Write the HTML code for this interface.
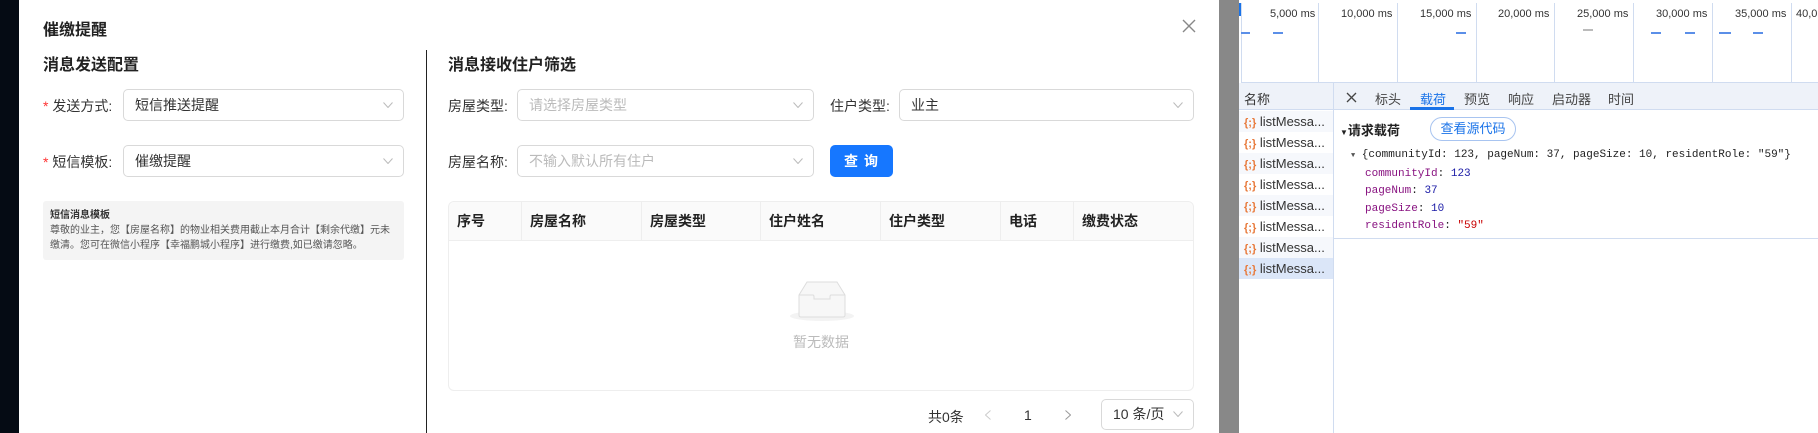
<!DOCTYPE html>
<html><head><meta charset="utf-8"><style>
*{margin:0;padding:0;box-sizing:border-box}
body{width:1818px;height:433px;overflow:hidden;position:relative;background:#fff;font-family:"Liberation Sans","Noto Sans CJK SC",sans-serif;color:#333}
.a{position:absolute;white-space:nowrap}
.sel{position:absolute;border:1px solid #d9d9d9;border-radius:5px;background:#fff;height:32px;font-size:14px;line-height:30px;padding-left:11px}
.sel svg{position:absolute;right:10px;top:12px}
.lbl{font-size:14px;color:#333}
.th{position:absolute;top:201px;height:40px;line-height:40px;font-size:14px;font-weight:bold;color:#222;padding-left:8px;border-right:1px solid #eee}
.mono{font-family:"Liberation Mono","Noto Sans CJK SC",monospace;font-size:11px}
.row{height:21px;line-height:21px;padding-left:5px}
.ic{color:#e8793a;font-size:11px;font-weight:bold}
</style></head><body>
<div class="a" style="left:0;top:0;width:19px;height:433px;background:#050b14"></div>
<div class="a" style="left:19px;top:0;width:1200px;height:433px;background:#fff;border-top-left-radius:8px"></div>
<div class="a" style="left:1219px;top:0;width:20px;height:433px;background:#888"></div>

<div class="a" style="left:43px;top:16px;font-size:16px;font-weight:bold;color:#222">催缴提醒</div>
<svg class="a" style="left:1182px;top:19px" width="14" height="14" viewBox="0 0 14 14"><path d="M1 1L13 13M13 1L1 13" stroke="#888" stroke-width="1.4"/></svg>
<div class="a" style="left:43px;top:51px;font-size:16px;font-weight:bold;color:#222">消息发送配置</div>
<div class="a" style="left:426px;top:50px;width:1px;height:383px;background:#222"></div>
<div class="a" style="left:448px;top:51px;font-size:16px;font-weight:bold;color:#222">消息接收住户筛选</div>

<div class="a lbl" style="left:43px;top:96px"><span style="color:#f33">*</span> 发送方式:</div>
<div class="sel" style="left:123px;top:89px;width:281px">短信推送提醒<svg width="10" height="6"><path d="M0.5 0.5L5 5.5L9.5 0.5" fill="none" stroke="#bbb"/></svg></div>
<div class="a lbl" style="left:43px;top:152px"><span style="color:#f33">*</span> 短信模板:</div>
<div class="sel" style="left:123px;top:145px;width:281px">催缴提醒<svg width="10" height="6"><path d="M0.5 0.5L5 5.5L9.5 0.5" fill="none" stroke="#bbb"/></svg></div>
<div class="a" style="left:43px;top:201px;width:361px;height:59px;background:#f4f4f4;border-radius:3px;padding:7px 7px;font-size:10px;line-height:15px;color:#555;white-space:normal">
<b style="color:#333">短信消息模板</b><br>尊敬的业主，您【房屋名称】的物业相关费用截止本月合计【剩余代缴】元未缴清。您可在微信小程序【幸福鹏城小程序】进行缴费,如已缴请忽略。</div>

<div class="a lbl" style="left:448px;top:96px">房屋类型:</div>
<div class="sel" style="left:517px;top:89px;width:297px;color:#bbb">请选择房屋类型<svg width="10" height="6"><path d="M0.5 0.5L5 5.5L9.5 0.5" fill="none" stroke="#bbb"/></svg></div>
<div class="a lbl" style="left:830px;top:96px">住户类型:</div>
<div class="sel" style="left:899px;top:89px;width:295px">业主<svg width="10" height="6"><path d="M0.5 0.5L5 5.5L9.5 0.5" fill="none" stroke="#bbb"/></svg></div>
<div class="a lbl" style="left:448px;top:152px">房屋名称:</div>
<div class="sel" style="left:517px;top:145px;width:297px;color:#bbb">不输入默认所有住户<svg width="10" height="6"><path d="M0.5 0.5L5 5.5L9.5 0.5" fill="none" stroke="#bbb"/></svg></div>
<div class="a" style="left:830px;top:145px;width:63px;height:32px;background:#1677ff;border-radius:5px;color:#fff;font-size:14px;font-weight:bold;text-align:center;line-height:32px;letter-spacing:6px;padding-left:5px">查询</div>

<div class="a" style="left:448px;top:201px;width:746px;height:190px;border:1px solid #eee;border-radius:6px"></div>
<div class="a" style="left:449px;top:202px;width:744px;height:39px;background:#fafafa;border-bottom:1px solid #eee;border-radius:6px 6px 0 0"></div>
<div class="th" style="left:449px;width:73px">序号</div>
<div class="th" style="left:522px;width:120px">房屋名称</div>
<div class="th" style="left:642px;width:119px">房屋类型</div>
<div class="th" style="left:761px;width:120px">住户姓名</div>
<div class="th" style="left:881px;width:120px">住户类型</div>
<div class="th" style="left:1001px;width:73px">电话</div>
<div class="th" style="left:1074px;width:120px;border-right:none">缴费状态</div>
<div class="a" style="left:790px;top:311px;width:64px;height:10px;border-radius:50%;background:#f3f3f3"></div>
<svg class="a" style="left:798px;top:281px" width="48" height="37" viewBox="0 0 48 37"><path d="M1 14L9 1H39L47 14V34Q47 36 45 36H3Q1 36 1 34Z" fill="#f7f7f7" stroke="#ddd"/><path d="M1 14H15Q16 14 16 16V18H32V16Q32 14 33 14H47" fill="none" stroke="#ddd"/></svg>
<div class="a" style="left:793px;top:332px;font-size:14px;color:#bbb">暂无数据</div>

<div class="a" style="left:928px;top:407px;font-size:14px;color:#333">共0条</div>
<svg class="a" style="left:985px;top:410px" width="6" height="10"><path d="M5.5 0.5L0.5 5L5.5 9.5" fill="none" stroke="#ccc"/></svg>
<div class="a" style="left:1024px;top:407px;font-size:14px;color:#333">1</div>
<svg class="a" style="left:1065px;top:410px" width="6" height="10"><path d="M0.5 0.5L5.5 5L0.5 9.5" fill="none" stroke="#999"/></svg>
<div class="sel" style="left:1101px;top:399px;width:93px;height:31px;line-height:29px">10 条/页<svg width="10" height="6" style="top:11px"><path d="M0.5 0.5L5 5.5L9.5 0.5" fill="none" stroke="#bbb"/></svg></div>

<!-- devtools -->
<div class="a" style="left:1239px;top:0;width:579px;height:433px;background:#fff"></div>
<div class="a" style="left:1239px;top:3px;width:2px;height:13px;background:#1a73e8"></div>
<div class="a" style="left:1241px;top:3px;width:577px;height:80px;border-left:1px solid #d0dcf0;border-bottom:1px solid #d0dcf0"></div>
<div class="a" style="left:1318px;top:3px;width:1px;height:80px;background:#d0dcf0"></div>
<div class="a" style="left:1397px;top:3px;width:1px;height:80px;background:#d0dcf0"></div>
<div class="a" style="left:1476px;top:3px;width:1px;height:80px;background:#d0dcf0"></div>
<div class="a" style="left:1554px;top:3px;width:1px;height:80px;background:#d0dcf0"></div>
<div class="a" style="left:1633px;top:3px;width:1px;height:80px;background:#d0dcf0"></div>
<div class="a" style="left:1712px;top:3px;width:1px;height:80px;background:#d0dcf0"></div>
<div class="a" style="left:1791px;top:3px;width:1px;height:80px;background:#d0dcf0"></div>
<div class="a" style="left:1270px;top:8px;font-size:11px;color:#333">5,000 ms</div>
<div class="a" style="left:1341px;top:8px;font-size:11px;color:#333">10,000 ms</div>
<div class="a" style="left:1420px;top:8px;font-size:11px;color:#333">15,000 ms</div>
<div class="a" style="left:1498px;top:8px;font-size:11px;color:#333">20,000 ms</div>
<div class="a" style="left:1577px;top:8px;font-size:11px;color:#333">25,000 ms</div>
<div class="a" style="left:1656px;top:8px;font-size:11px;color:#333">30,000 ms</div>
<div class="a" style="left:1735px;top:8px;font-size:11px;color:#333">35,000 ms</div>
<div class="a" style="left:1796px;top:8px;font-size:11px;color:#333">40,0</div>
<div class="a" style="left:1241px;top:32px;width:9px;height:2px;background:#5b8fe8"></div>
<div class="a" style="left:1273px;top:32px;width:10px;height:2px;background:#5b8fe8"></div>
<div class="a" style="left:1456px;top:32px;width:10px;height:2px;background:#5b8fe8"></div>
<div class="a" style="left:1583px;top:29px;width:10px;height:2px;background:#bbb"></div>
<div class="a" style="left:1651px;top:32px;width:10px;height:2px;background:#5b8fe8"></div>
<div class="a" style="left:1685px;top:32px;width:10px;height:2px;background:#5b8fe8"></div>
<div class="a" style="left:1719px;top:32px;width:12px;height:2px;background:#5b8fe8"></div>
<div class="a" style="left:1753px;top:32px;width:10px;height:2px;background:#5b8fe8"></div>

<div class="a" style="left:1239px;top:83px;width:579px;height:27px;background:#eef2f9;border-bottom:1px solid #d0dcf0"></div>
<div class="a" style="left:1333px;top:83px;width:1px;height:350px;background:#d0dcf0"></div>
<div class="a" style="left:1244px;top:89px;font-size:13px;color:#333">名称</div>
<svg class="a" style="left:1346px;top:92px" width="11" height="11"><path d="M1 1L10 10M10 1L1 10" stroke="#444" stroke-width="1.3"/></svg>
<div class="a" style="left:1375px;top:89px;font-size:13px;color:#444">标头</div>
<div class="a" style="left:1420px;top:89px;font-size:13px;color:#1a73e8">载荷</div>
<div class="a" style="left:1410px;top:107px;width:44px;height:3px;background:#1a73e8"></div>
<div class="a" style="left:1464px;top:89px;font-size:13px;color:#444">预览</div>
<div class="a" style="left:1508px;top:89px;font-size:13px;color:#444">响应</div>
<div class="a" style="left:1552px;top:89px;font-size:13px;color:#444">启动器</div>
<div class="a" style="left:1608px;top:89px;font-size:13px;color:#444">时间</div>

<div class="a" style="left:1239px;top:111px;width:94px;font-size:13px;color:#333">
<div class="row" style="background:#f6f8fc"><span class="ic">{;}</span> listMessa...</div>
<div class="row"><span class="ic">{;}</span> listMessa...</div>
<div class="row" style="background:#f6f8fc"><span class="ic">{;}</span> listMessa...</div>
<div class="row"><span class="ic">{;}</span> listMessa...</div>
<div class="row" style="background:#f6f8fc"><span class="ic">{;}</span> listMessa...</div>
<div class="row"><span class="ic">{;}</span> listMessa...</div>
<div class="row" style="background:#f6f8fc"><span class="ic">{;}</span> listMessa...</div>
<div class="row" style="background:#dbe6f8"><span class="ic">{;}</span> listMessa...</div>
</div>

<div class="a" style="left:1340px;top:120px;font-size:13px;font-weight:bold;color:#222"><span style="font-size:8px">▼</span>请求载荷</div>
<div class="a" style="left:1430px;top:117px;width:86px;height:24px;border:1px solid #a8c4f0;border-radius:12px;font-size:13px;color:#1a73e8;text-align:center;line-height:22px">查看源代码</div>
<div class="a mono" style="left:1351px;top:149px;color:#222"><span style="font-size:7px;color:#555">▼</span> {communityId: 123, pageNum: 37, pageSize: 10, residentRole: "59"}</div>
<div class="a mono" style="left:1365px;top:168px;color:#881280">communityId<span style="color:#222">:</span> <span style="color:#1a1aa6">123</span></div>
<div class="a mono" style="left:1365px;top:185px;color:#881280">pageNum<span style="color:#222">:</span> <span style="color:#1a1aa6">37</span></div>
<div class="a mono" style="left:1365px;top:203px;color:#881280">pageSize<span style="color:#222">:</span> <span style="color:#1a1aa6">10</span></div>
<div class="a mono" style="left:1365px;top:220px;color:#881280">residentRole<span style="color:#222">:</span> <span style="color:#c80000">"59"</span></div>
<div class="a" style="left:1334px;top:238px;width:484px;height:1px;background:#d0dcf0"></div>
</body></html>
